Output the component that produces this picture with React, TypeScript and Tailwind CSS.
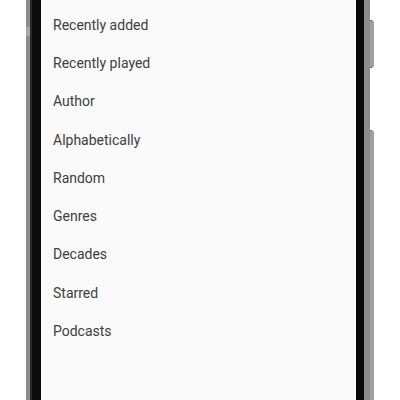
import React from 'react';

const items = [
  'Recently added',
  'Recently played',
  'Author',
  'Alphabetically',
  'Random',
  'Genres',
  'Decades',
  'Starred',
  'Podcasts',
];

export default function App() {
  return (
    <div className="w-[400px] h-[400px] overflow-hidden bg-white flex">
      <div className="relative ml-[26px] w-[344px] h-full flex bg-[#8c8c8c] pl-[4px] pr-[6px]">
        {/* left edge button highlight */}
        <div className="absolute left-0 top-[27px] w-[4px] h-[9px] bg-[#a8a8a8]" />
        {/* right side buttons */}
        <div className="absolute -right-[4px] top-[20px] w-[4px] h-[48px] rounded-r-sm bg-[#a0a0a0] border-y border-[#666]" />
        <div className="absolute -right-[4px] top-[130px] w-[4px] h-[300px] rounded-r-sm bg-[#a0a0a0] border-t border-[#666]" />
        <div className="flex-1 flex bg-[#0b0b0b] pl-[9px] pr-[8px] border-l-2 border-[#2a2a2a]">
          <div
            className="flex-1 bg-[#fafafa] pt-[6px] pl-[12px]"
            style={{ fontFamily: 'Roboto, "Noto Sans", sans-serif' }}
          >
            {items.map((item) => (
              <div key={item} className="h-[38.3px] flex items-center text-[14px] text-[#404040]">
                {item}
              </div>
            ))}
          </div>
        </div>
      </div>
    </div>
  );
}
